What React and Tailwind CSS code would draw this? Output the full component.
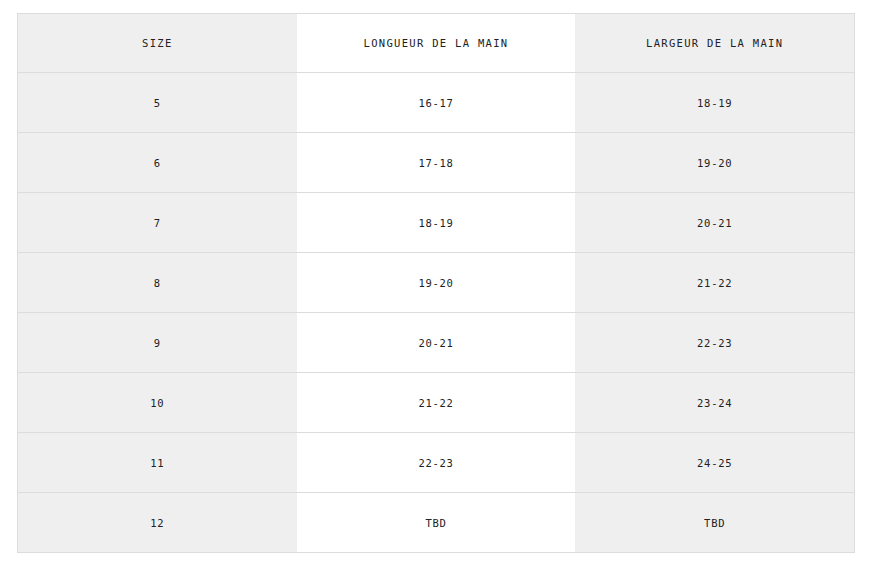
const rows = [
  ["5", "16-17", "18-19"],
  ["6", "17-18", "19-20"],
  ["7", "18-19", "20-21"],
  ["8", "19-20", "21-22"],
  ["9", "20-21", "22-23"],
  ["10", "21-22", "23-24"],
  ["11", "22-23", "24-25"],
  ["12", "TBD", "TBD"],
];

const Row = ({ cells, head }) => (
  <div
    className={`grid grid-cols-3 border-t border-[#dcdcdc] ${head ? "h-[59px] tracking-[1.3px]" : "h-[60px] tracking-[0.7px]"}`}
  >
    {cells.map((c, i) => (
      <div
        key={i}
        className={`flex items-center justify-center pt-[2px] ${i === 1 ? "bg-white" : "bg-[#efefef]"}`}
      >
        {c}
      </div>
    ))}
  </div>
);

const App = () => {
  return (
    <div className="w-[882px] h-[578px] bg-white pt-[13px] pl-[17px]">
      <div className="w-[838px] border-x border-b border-[#dcdcdc] font-['DejaVu_Sans_Mono',monospace] text-[10.5px] text-[#222]">
        <Row cells={["SIZE", "LONGUEUR DE LA MAIN", "LARGEUR DE LA MAIN"]} head />
        {rows.map((r) => (
          <Row key={r[0]} cells={r} />
        ))}
      </div>
    </div>
  );
};

export default App;
